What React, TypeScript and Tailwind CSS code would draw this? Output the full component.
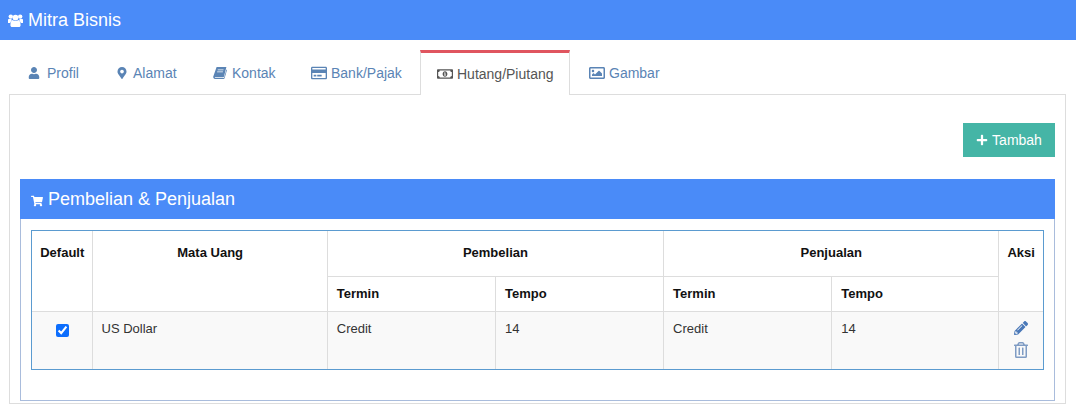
import { FaMapMarkerAlt, FaPencilAlt, FaPlus, FaRegCreditCard, FaRegImage, FaRegMoneyBillAlt, FaRegTrashAlt, FaShoppingCart, FaUser } from "react-icons/fa";

const BookIcon = () => (
  <svg width="14" height="12" viewBox="0 0 14 12" fill="currentColor">
    <path d="M3.6 0H13.4L11 9.4C10.8 10 10.4 10.2 9.8 10.2H2.2C1.8 10.2 1.6 10.5 1.8 10.8C2 11 2.3 11 2.6 11H11L13.4 2.6L14 3L11.6 11.2C11.4 11.7 11 12 10.5 12H2C1 12 0 11 0.2 9.8Z" />
    <path d="M4.8 2.4H10.6L10.4 3.2H4.6ZM4.2 4.4H10L9.8 5.2H4Z" fill="white" />
  </svg>
);

const GroupIcon = () => (
  <svg width="15" height="13" viewBox="0 0 15 13" fill="currentColor">
    <circle cx="2.8" cy="2.6" r="2.2" />
    <circle cx="12.2" cy="2.6" r="2.2" />
    <circle cx="7.5" cy="3.6" r="2.9" />
    <path d="M0 5.4C1 5 2.6 5 3.8 5.6C3.6 7 2.6 8 2 9H0ZM15 5.4C14 5 12.4 5 11.2 5.6C11.4 7 12.4 8 13 9H15ZM4.6 6C6 7.4 9 7.4 10.4 6C12 6.8 12.6 9 12.6 11.2C12.6 12.4 11.8 13 11 13H4C3.2 13 2.4 12.4 2.4 11.2C2.4 9 3 6.8 4.6 6Z" />
  </svg>
);

const tabs = [
  { label: "Profil", icon: <FaUser className="text-[12px]" />, width: "w-[87px]", gap: "gap-[7px]" },
  { label: "Alamat", icon: <FaMapMarkerAlt className="text-[12px] -ml-[1px]" />, width: "w-[94px]", gap: "gap-[5px]" },
  { label: "Kontak", icon: <BookIcon />, width: "w-[96px]", gap: "gap-[5px]" },
  { label: "Bank/Pajak", icon: <FaRegCreditCard className="text-[16px]" />, width: "w-[124px]", gap: "gap-[4px]" },
  { label: "Hutang/Piutang", icon: <FaRegMoneyBillAlt className="text-[16px]" />, width: "w-[150px]", gap: "gap-[4px]", active: true },
  { label: "Gambar", icon: <FaRegImage className="text-[16px]" />, width: "w-[105px]", gap: "gap-[4px]" },
];

const th = "border border-[#dddddd] font-bold text-[#111] text-[13px] align-top";
const td = "border border-[#dddddd] align-top pl-[9px] pr-2 pt-[7px] pb-2";

export default function App() {
  return (
    <div className="w-[1076px] h-[408px] overflow-hidden bg-white font-['Liberation_Sans',Arial,sans-serif] text-[13px] text-[#333]">
      <div className="h-10 bg-[#4a8bf8] flex items-center pl-[8px] gap-[5px] text-white text-[18px]">
        <GroupIcon />
        <span>Mitra Bisnis</span>
      </div>
      <div className="flex gap-[2px] h-[55px] border-b border-[#dddddd] ml-[9px] mr-[10px] pl-[2px] items-end">
        {tabs.map((t) => (
          <div
            key={t.label}
            className={
              t.active
                ? `${t.width} ${t.gap} h-[45px] -mb-px pl-[16px] flex items-center bg-white text-[#555] text-[14px] border-x border-[#dddddd] border-t-[3px] border-t-[#e0555f]`
                : `${t.width} ${t.gap} h-[44px] pl-[17px] pt-[2px] flex items-center text-[#5a84b5] text-[14px]`
            }
          >
            {t.icon}
            <span>{t.label}</span>
          </div>
        ))}
      </div>
      <div className="ml-[9px] mr-[10px] h-[309px] border border-t-0 border-[#dddddd] px-[10px] pt-[28px]">
        <div className="flex justify-end">
          <button className="w-[92px] h-[34px] bg-[#45b5a6] text-white text-[14px] flex items-center justify-center gap-1">
            <FaPlus className="text-[12px]" />
            Tambah
          </button>
        </div>
        <div className="mt-[22px] h-[222px] border border-[#a9bcdc]">
          <div className="h-[40px] -mx-px -mt-px bg-[#4a8bf8] text-white text-[18px] flex items-center pl-[11px] gap-[5px]">
            <FaShoppingCart className="text-[12px] mt-[3px]" />
            <span>Pembelian &amp; Penjualan</span>
          </div>
          <div className="mx-[10px] mt-[11px] border border-[#5b9bd0]">
            <table className="w-full table-fixed border-collapse border-hidden">
              <colgroup>
                <col className="w-[60px]" />
                <col className="w-[235px]" />
                <col className="w-[168px]" />
                <col className="w-[168px]" />
                <col className="w-[168px]" />
                <col className="w-[167px]" />
                <col className="w-[44px]" />
              </colgroup>
              <thead>
                <tr className="h-[45px]">
                  <th rowSpan={2} className={`${th} pt-[12px] pl-[1px]`}>Default</th>
                  <th rowSpan={2} className={`${th} pt-[12px] pl-[1px]`}>Mata Uang</th>
                  <th colSpan={2} className={`${th} pt-[12px]`}>Pembelian</th>
                  <th colSpan={2} className={`${th} pt-[12px]`}>Penjualan</th>
                  <th rowSpan={2} className={`${th} pt-[12px]`}>Aksi</th>
                </tr>
                <tr className="h-[35px]">
                  <th className={`${th} text-left pl-[9px] pt-[7px] pb-[6px]`}>Termin</th>
                  <th className={`${th} text-left pl-[9px] pt-[7px] pb-[6px]`}>Tempo</th>
                  <th className={`${th} text-left pl-[9px] pt-[7px] pb-[6px]`}>Termin</th>
                  <th className={`${th} text-left pl-[9px] pt-[7px] pb-[6px]`}>Tempo</th>
                </tr>
              </thead>
              <tbody>
                <tr className="h-[58px] bg-[#f9f9f9] text-[13px]">
                  <td className="border border-[#dddddd] text-center align-top pt-[11px] pl-[1px]">
                    <input type="checkbox" defaultChecked className="w-[13px] h-[13px] accent-[#0d6efd]" />
                  </td>
                  <td className={td}>US Dollar</td>
                  <td className={td}>Credit</td>
                  <td className={td}>14</td>
                  <td className={td}>Credit</td>
                  <td className={td}>14</td>
                  <td className="border border-[#dddddd] align-top pt-[9px]">
                    <div className="flex flex-col items-center gap-[7px] text-[#4a78b8]">
                      <FaPencilAlt className="text-[14px]" />
                      <FaRegTrashAlt className="text-[16px] text-[#7f9cc4]" />
                    </div>
                  </td>
                </tr>
              </tbody>
            </table>
          </div>
        </div>
      </div>
    </div>
  );
}
